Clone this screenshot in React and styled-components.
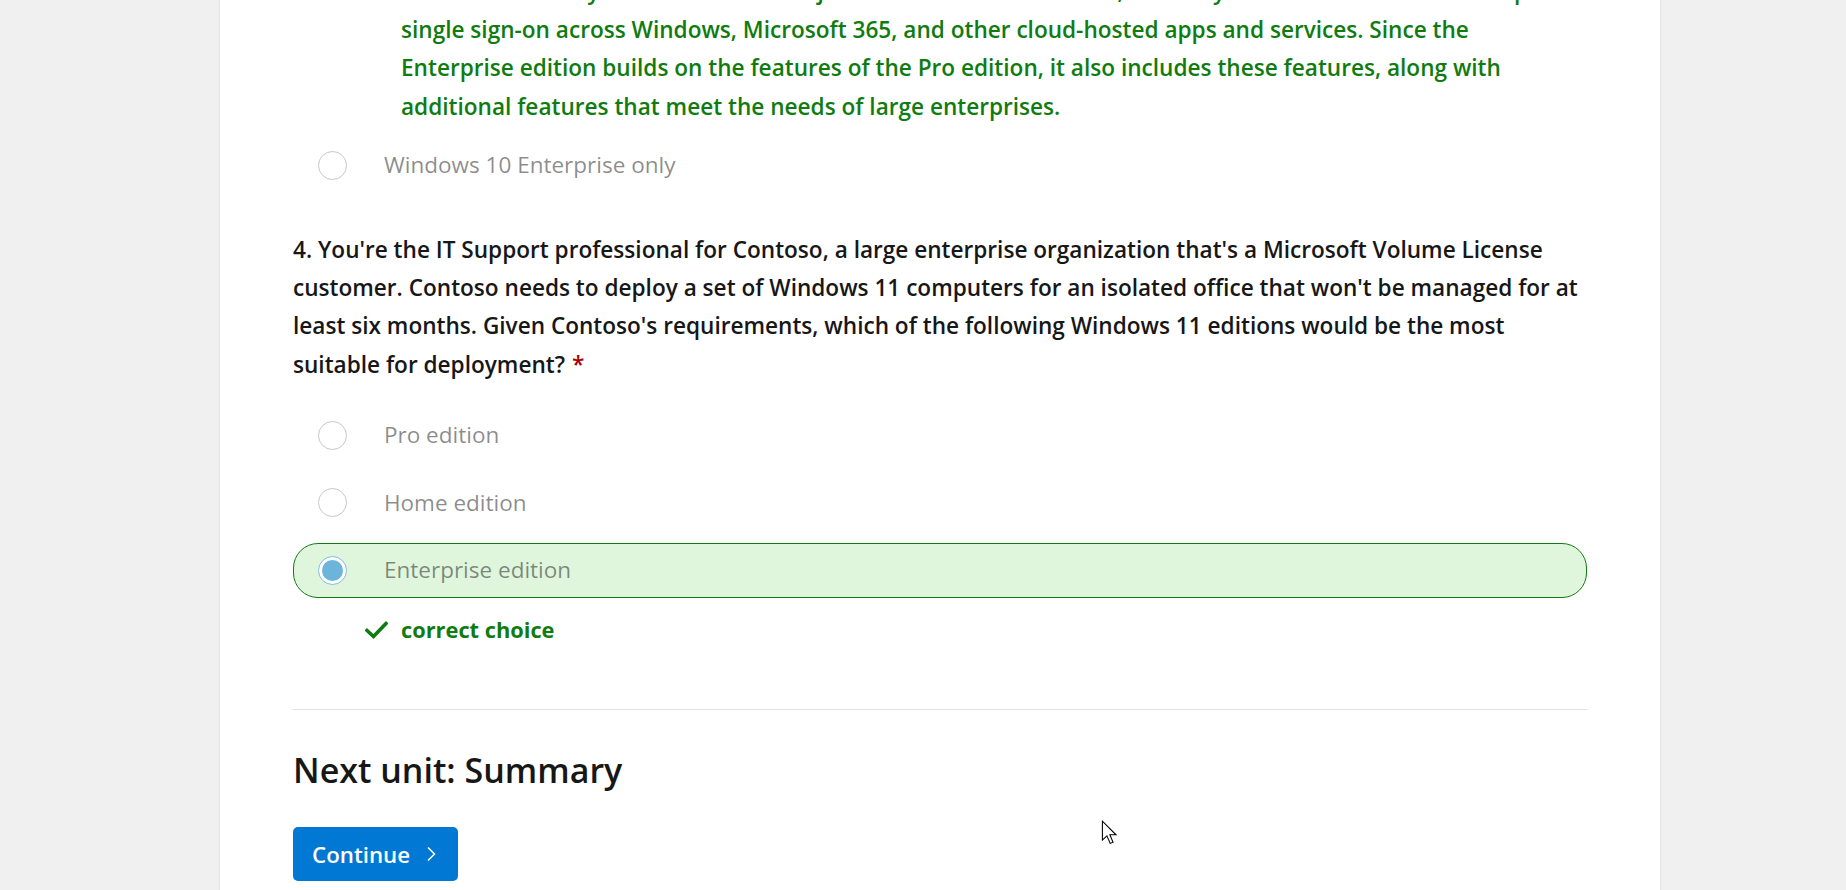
import React from "react";
import styled, { createGlobalStyle } from "styled-components";

const GlobalStyle = createGlobalStyle`
  html, body {
    margin: 0;
    padding: 0;
    overflow: hidden;
    background: #f0f0f0;
  }
  body {
    font-family: "Open Sans", "Noto Sans", Arial, sans-serif;
    color: #171717;
  }
`;

const Page = styled.div`
  position: relative;
  width: 100%;
  height: 890px;
  overflow: hidden;
  background: #f0f0f0;
`;

const Panel = styled.main`
  margin-left: 220px;
  margin-top: -27.6px;
  width: 1440px;
  box-sizing: border-box;
  padding: 0 73px 80px;
  background: #ffffff;
  box-shadow: 0 0 2px rgba(0, 0, 0, 0.12);
  min-height: 1000px;
`;

const Explanation = styled.p`
  margin: 0;
  padding-left: 108px;
  font-size: 22.6px;
  font-weight: 600;
  line-height: 38.4px;
  color: #107c10;
  white-space: nowrap;
`;

const OptionList = styled.div`
  display: flex;
  flex-direction: column;
  gap: 12.5px;
  margin-top: ${(p) => p.$top}px;
`;

const OptionRow = styled.label`
  display: flex;
  align-items: center;
  height: 55px;
  box-sizing: border-box;
  padding-left: 24px;
  border-radius: 25px;
  border: 1px solid ${(p) => (p.$correct ? "#107c10" : "transparent")};
  background: ${(p) => (p.$correct ? "#dff6dd" : "transparent")};
`;

const Radio = styled.span`
  flex: none;
  width: 29px;
  height: 29px;
  box-sizing: border-box;
  border-radius: 50%;
  border: ${(p) => (p.$checked ? "1.5px solid #7cbde2" : "1px solid #c8c8c8")};
  background: #ffffff;
  display: flex;
  align-items: center;
  justify-content: center;
`;

const RadioDot = styled.span`
  width: 21px;
  height: 21px;
  border-radius: 50%;
  background: #6db4db;
`;

const OptionLabel = styled.span`
  margin-left: 37px;
  font-size: 22.5px;
  font-weight: 400;
  line-height: 38.4px;
  color: rgba(23, 23, 23, 0.5);
`;

const Question = styled.p`
  margin: 37.9px 0 0;
  font-size: 22.6px;
  font-weight: 600;
  line-height: 38.4px;
  color: #171717;
  white-space: nowrap;
`;

const Required = styled.span`
  color: #a80000;
  margin-left: 7px;
`;

const Feedback = styled.div`
  display: flex;
  align-items: center;
  margin-top: 13.4px;
  padding-left: 72px;
  height: 38.4px;
`;

const CheckIcon = styled.svg`
  width: 23px;
  height: 18px;
  flex: none;
`;

const FeedbackText = styled.span`
  margin-left: 13px;
  font-size: 21.8px;
  font-weight: 700;
  color: #107c10;
  line-height: 38.4px;
`;

const Divider = styled.hr`
  margin: 59.2px 0 0;
  border: 0;
  border-top: 1px solid #e3e3e3;
  height: 0;
`;

const NextHeading = styled.h2`
  margin: 38px 0 0;
  font-size: 34px;
  font-weight: 600;
  line-height: 44px;
  color: #171717;
`;

const ContinueButton = styled.button`
  margin-top: 35.7px;
  display: inline-flex;
  align-items: center;
  gap: 16px;
  height: 54px;
  width: 165px;
  box-sizing: border-box;
  padding: 0 0 0 19px;
  border: 0;
  border-radius: 5px;
  background: #0078d4;
  color: #ffffff;
  font-family: "Open Sans", "Noto Sans", Arial, sans-serif;
  font-size: 22.3px;
  font-weight: 600;
  cursor: pointer;
`;

const Chevron = styled.svg`
  width: 10px;
  height: 16px;
`;

const Cursor = styled.svg`
  position: absolute;
  left: 1101px;
  top: 820px;
  width: 17px;
  height: 26px;
`;

function Option({ label, checked, correct }) {
  return (
    <OptionRow $correct={correct}>
      <Radio $checked={checked}>{checked && <RadioDot />}</Radio>
      <OptionLabel>{label}</OptionLabel>
    </OptionRow>
  );
}

export default function App() {
  return (
    <>
      <GlobalStyle />
      <Page>
        <Panel>
          <Explanation>
            Both editions fully allow devices to be joined to Microsoft Entra ID, and they can then benefit from simple
            <br />
            single sign-on across Windows, Microsoft 365, and other cloud-hosted apps and services. Since the
            <br />
            Enterprise edition builds on the features of the Pro edition, it also includes these features, along with
            <br />
            additional features that meet the needs of large enterprises.
          </Explanation>
          <OptionList $top={11.6}>
            <Option label="Windows 10 Enterprise only" />
          </OptionList>
          <Question>
            4. You're the IT Support professional for Contoso, a large enterprise organization that's a Microsoft Volume License
            <br />
            customer. Contoso needs to deploy a set of Windows 11 computers for an isolated office that won't be managed for at
            <br />
            least six months. Given Contoso's requirements, which of the following Windows 11 editions would be the most
            <br />
            suitable for deployment?<Required>*</Required>
          </Question>
          <OptionList $top={23.6}>
            <Option label="Pro edition" />
            <Option label="Home edition" />
            <Option label="Enterprise edition" checked correct />
          </OptionList>
          <Feedback>
            <CheckIcon viewBox="0 0 23 18">
              <path d="M2 9.5 L8.5 15.5 L21 2.5" fill="none" stroke="#107c10" strokeWidth="3.6" strokeLinecap="square" />
            </CheckIcon>
            <FeedbackText>correct choice</FeedbackText>
          </Feedback>
          <Divider />
          <NextHeading>Next unit: Summary</NextHeading>
          <ContinueButton type="button">
            Continue
            <Chevron viewBox="0 0 10 16">
              <path d="M2 1.5 L8.5 8 L2 14.5" fill="none" stroke="#ffffff" strokeWidth="1.5" />
            </Chevron>
          </ContinueButton>
        </Panel>
        <Cursor viewBox="0 0 14 22">
          <path
            d="M1 1 L1 17 L4.8 13.4 L7.6 19.8 L10 18.8 L7.3 12.5 L12.5 12.5 Z"
            fill="#ffffff"
            stroke="#000000"
            strokeWidth="0.9"
            strokeLinejoin="miter"
          />
        </Cursor>
      </Page>
    </>
  );
}
